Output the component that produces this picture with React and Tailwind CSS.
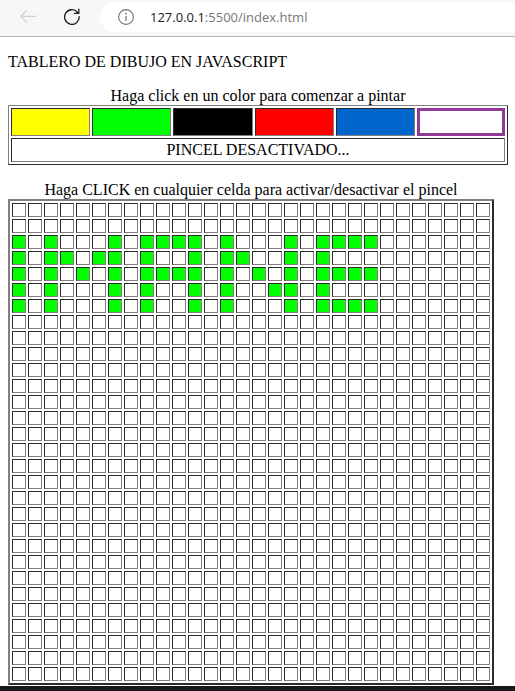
import React, { useState } from "react";

const SIZE = 30;

const DRAWING = {
  2: "#.#...#.####.#...#.####",
  3: "#.##.##.#..#.##..#.#...",
  4: "#.#.#.#.####.#.#.#.####",
  5: "#.#...#.#..#.#..##.#...",
  6: "#.#...#.#..#.#...#.####",
};

const COLORS = [
  { name: "amarillo", fill: "bg-[#ffff00]" },
  { name: "verde", fill: "bg-[#00ff00]" },
  { name: "negro", fill: "bg-black" },
  { name: "rojo", fill: "bg-[#ff0000]" },
  { name: "azul", fill: "bg-[#0066cc]" },
  { name: "blanco", fill: "bg-white" },
];

const INSET = "border border-t-[#2c2c2c] border-l-[#2c2c2c] border-r-[#808080] border-b-[#808080]";
const OUTSET = "border-t-[#808080] border-l-[#808080] border-r-[#2c2c2c] border-b-[#2c2c2c]";

function initialCells() {
  return Array.from({ length: SIZE }, (_, r) =>
    Array.from({ length: SIZE }, (_, c) => (DRAWING[r]?.[c] === "#" ? 1 : 5))
  );
}

function BrowserBar() {
  return (
    <header className="flex h-[37px] items-start overflow-hidden border-b border-[#b9b9b9] bg-[#f7f7f7] font-['Open_Sans','Noto_Sans',sans-serif]">
      <button type="button" aria-label="Atrás" className="ml-5 mt-2 text-[#cfcfcf]">
        <svg width="16" height="17" viewBox="0 0 16 17" fill="none" stroke="currentColor" strokeWidth="1.2">
          <path d="M7 1.8 0.8 8.3 7 14.8M0.8 8.3H16" />
        </svg>
      </button>
      <button type="button" aria-label="Recargar" className="ml-7 mt-2 text-[#1c1c1c]">
        <svg width="16" height="17" viewBox="0 0 16 17" fill="none" stroke="currentColor" strokeWidth="1.3" strokeLinecap="round" strokeLinejoin="round">
          <path d="M15.2 8.6A7.3 7.3 0 1 1 13.4 4.2L14.6 5.4M14.8 1.2V5.4H10.4" />
        </svg>
      </button>
      <div className="ml-5 mt-0.5 flex h-[30px] grow items-center rounded-l-full bg-white pl-[18px]">
        <svg width="16" height="16" viewBox="0 0 16 16" fill="none" stroke="#747474" strokeWidth="1.1">
          <circle cx="8" cy="8" r="7.4" />
          <path d="M8 7V12" strokeWidth="1.3" />
          <circle cx="8" cy="4.7" r="0.9" fill="#747474" stroke="none" />
        </svg>
        <span className="ml-4 text-[13px] leading-5 text-[#777777]">
          <span className="text-[#1b1b1b]">127.0.0.1</span>:5500/index.html
        </span>
      </div>
    </header>
  );
}

export default function App() {
  const [color, setColor] = useState(5);
  const [active, setActive] = useState(false);
  const [cells, setCells] = useState(initialCells);

  const paint = (r, c) =>
    setCells((old) => old.map((row, i) => (i === r ? row.map((v, j) => (j === c ? color : v)) : row)));

  const toggle = (r, c) => {
    if (!active) paint(r, c);
    setActive(!active);
  };

  return (
    <div className="flex min-h-screen flex-col bg-white font-['Liberation_Serif',serif] text-[16px] leading-[18px] text-black">
      <BrowserBar />
      <main className="px-2 pb-px">
        <h1 className="my-4">TABLERO DE DIBUJO EN JAVASCRIPT</h1>

        <table className={`mb-4 w-[500px] table-fixed border-separate border-spacing-[2px] border ${OUTSET}`}>
          <caption>Haga click en un color para comenzar a pintar</caption>
          <colgroup>
            <col />
            <col />
            <col />
            <col />
            <col />
            <col className="w-[88px]" />
          </colgroup>
          <tbody>
            <tr>
              {COLORS.map((item, i) => (
                <td
                  key={item.name}
                  className={`h-7 p-0 ${item.fill} ${i === color ? "border-3 border-[#8e3a96]" : INSET}`}
                >
                  <button
                    type="button"
                    aria-label={item.name}
                    aria-pressed={i === color}
                    onClick={() => setColor(i)}
                    className="block h-[22px] w-full"
                  />
                </td>
              ))}
            </tr>
            <tr>
              <td colSpan={6} className={`h-6 p-0 text-center ${INSET}`}>
                {active ? "PINCEL ACTIVADO..." : "PINCEL DESACTIVADO..."}
              </td>
            </tr>
          </tbody>
        </table>

        <table className={`border-separate border-spacing-[2px] border-2 ${OUTSET}`}>
          <caption>Haga CLICK en cualquier celda para activar/desactivar el pincel</caption>
          <tbody>
            {cells.map((row, r) => (
              <tr key={r}>
                {row.map((value, c) => (
                  <td key={c} className={`p-0 ${INSET} ${COLORS[value].fill}`}>
                    <button
                      type="button"
                      aria-label={`Fila ${r + 1}, columna ${c + 1}`}
                      onClick={() => toggle(r, c)}
                      onMouseEnter={() => active && paint(r, c)}
                      className="block size-3"
                    />
                  </td>
                ))}
              </tr>
            ))}
          </tbody>
        </table>
      </main>
      <div className="min-h-[5px] grow bg-[#19171e]" />
    </div>
  );
}
